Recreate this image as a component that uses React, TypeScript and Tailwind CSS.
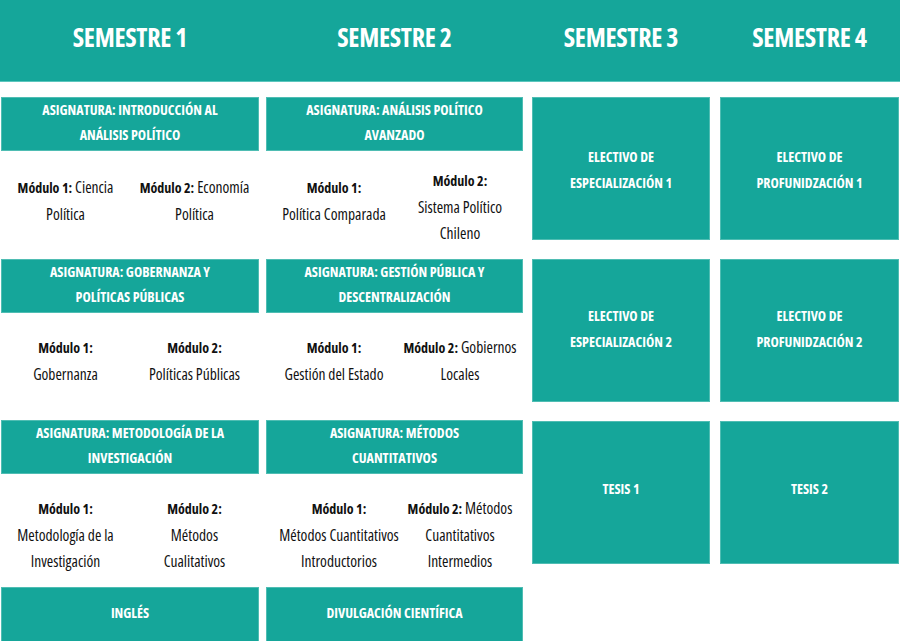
import React from "react";

const TEAL = "bg-[#15a69a]";
const FONT = "font-['Open_Sans',sans-serif] [font-stretch:75%]";

function Head({ lines, className = "" }: { lines: string[]; className?: string }) {
  return (
    <div
      className={`${TEAL} flex flex-col items-center justify-center text-white font-bold uppercase text-[14px] leading-[25px] ${FONT} border border-[#4fbdb3] ${className}`}
    >
      {lines.map((l, i) => (
        <div key={i} className="whitespace-nowrap">
          {l}
        </div>
      ))}
    </div>
  );
}

type Mod = { b: string; first?: string; rest: string[]; cls?: string };

function Module({ m }: { m: Mod }) {
  return (
    <div className={`flex flex-col items-center justify-center text-center ${m.cls ?? ""}`}>
      <div className="whitespace-nowrap">
        <span className="font-bold text-[14px]">{m.b}</span>
        {m.first ? <span> {m.first}</span> : null}
      </div>
      {m.rest.map((r, i) => (
        <div key={i} className="whitespace-nowrap">
          {r}
        </div>
      ))}
    </div>
  );
}

function Modules({ a, b, h, cls = "" }: { a: Mod; b: Mod; h: string; cls?: string }) {
  return (
    <div className={`grid grid-cols-2 ${h} ${cls} text-[15.5px] leading-[26px] text-[#111] ${FONT}`}>
      <Module m={a} />
      <Module m={b} />
    </div>
  );
}

function Big({ lines, cls = "" }: { lines: string[]; cls?: string }) {
  return <Head lines={lines} className={`h-[143px] leading-[26px] ${cls}`} />;
}

export default function App() {
  return (
    <div className="w-[900px] h-[641px] bg-white overflow-hidden relative">
      <div
        className={`${TEAL} h-[82px] flex pl-[1px] pr-[1px] pb-[6px] text-white font-bold text-[26px] tracking-[-0.3px] ${FONT} border-b border-[#5cc6bd]`}
      >
        <div className="w-[258px] flex items-center justify-center">SEMESTRE 1</div>
        <div className="w-[257px] ml-[7px] flex items-center justify-center">SEMESTRE 2</div>
        <div className="w-[178px] ml-[9px] flex items-center justify-center">SEMESTRE 3</div>
        <div className="w-[179px] ml-[10px] flex items-center justify-center">SEMESTRE 4</div>
      </div>
      <div className="flex pt-[15px] pl-[1px]">
        <div className="grid grid-cols-[258px_257px] gap-x-[7px]">
          <Head lines={["Asignatura: Introducción al", "Análisis Político"]} className="h-[54px] pb-[4px]" />
          <Head lines={["Asignatura: Análisis Político", "Avanzado"]} className="h-[54px] pb-[4px]" />
          <Modules
            h="h-[108px]"
            a={{ b: "Módulo 1:", first: "Ciencia", rest: ["Política"], cls: "pb-[10px]" }}
            b={{ b: "Módulo 2:", first: "Economía", rest: ["Política"], cls: "pb-[10px]" }}
          />
          <Modules
            h="h-[108px]"
            cls="pl-[5px]"
            a={{ b: "Módulo 1:", rest: ["Política Comparada"], cls: "pb-[10px]" }}
            b={{ b: "Módulo 2:", rest: ["Sistema Político", "Chileno"], cls: "pt-[2px]" }}
          />
          <Head lines={["Asignatura: Gobernanza y", "Políticas Públicas"]} className="h-[54px] pb-[4px]" />
          <Head lines={["Asignatura: Gestión Pública y", "Descentralización"]} className="h-[54px] pb-[4px]" />
          <Modules
            h="h-[107px]"
            a={{ b: "Módulo 1:", rest: ["Gobernanza"], cls: "pb-[12px]" }}
            b={{ b: "Módulo 2:", rest: ["Políticas Públicas"], cls: "pb-[12px]" }}
          />
          <Modules
            h="h-[107px]"
            cls="pl-[5px]"
            a={{ b: "Módulo 1:", rest: ["Gestión del Estado"], cls: "pb-[12px]" }}
            b={{ b: "Módulo 2:", first: "Gobiernos", rest: ["Locales"], cls: "pb-[12px]" }}
          />
          <Head lines={["Asignatura: Metodología de la", "Investigación"]} className="h-[54px] pb-[4px]" />
          <Head lines={["Asignatura: Métodos", "Cuantitativos"]} className="h-[54px] pb-[4px]" />
          <Modules
            h="h-[113px]"
            a={{ b: "Módulo 1:", rest: ["Metodología de la", "Investigación"], cls: "pt-[8px]" }}
            b={{ b: "Módulo 2:", rest: ["Métodos", "Cualitativos"], cls: "pt-[8px]" }}
          />
          <Modules
            h="h-[113px]"
            cls="pl-[5px]"
            a={{ b: "Módulo 1:", rest: ["Métodos Cuantitativos", "Introductorios"], cls: "pt-[8px] pl-[10px]" }}
            b={{ b: "Módulo 2:", first: "Métodos", rest: ["Cuantitativos", "Intermedios"], cls: "pt-[8px]" }}
          />
          <Head lines={["Inglés"]} className="h-[56px] pb-[6px]" />
          <Head lines={["Divulgación Científica"]} className="h-[56px] pb-[6px]" />
        </div>
        <div className="ml-[9px] grid grid-cols-[178px_179px] gap-x-[10px] gap-y-[19px] content-start">
          <Big lines={["Electivo de", "Especialización 1"]} cls="pt-[2px]" />
          <Big lines={["Electivo de", "Profunidzación 1"]} cls="pt-[2px]" />
          <Big lines={["Electivo de", "Especialización 2"]} cls="pb-[4px]" />
          <Big lines={["Electivo de", "Profunidzación 2"]} cls="pb-[4px]" />
          <Big lines={["Tesis 1"]} cls="pb-[8px]" />
          <Big lines={["Tesis 2"]} cls="pb-[8px]" />
        </div>
      </div>
    </div>
  );
}
